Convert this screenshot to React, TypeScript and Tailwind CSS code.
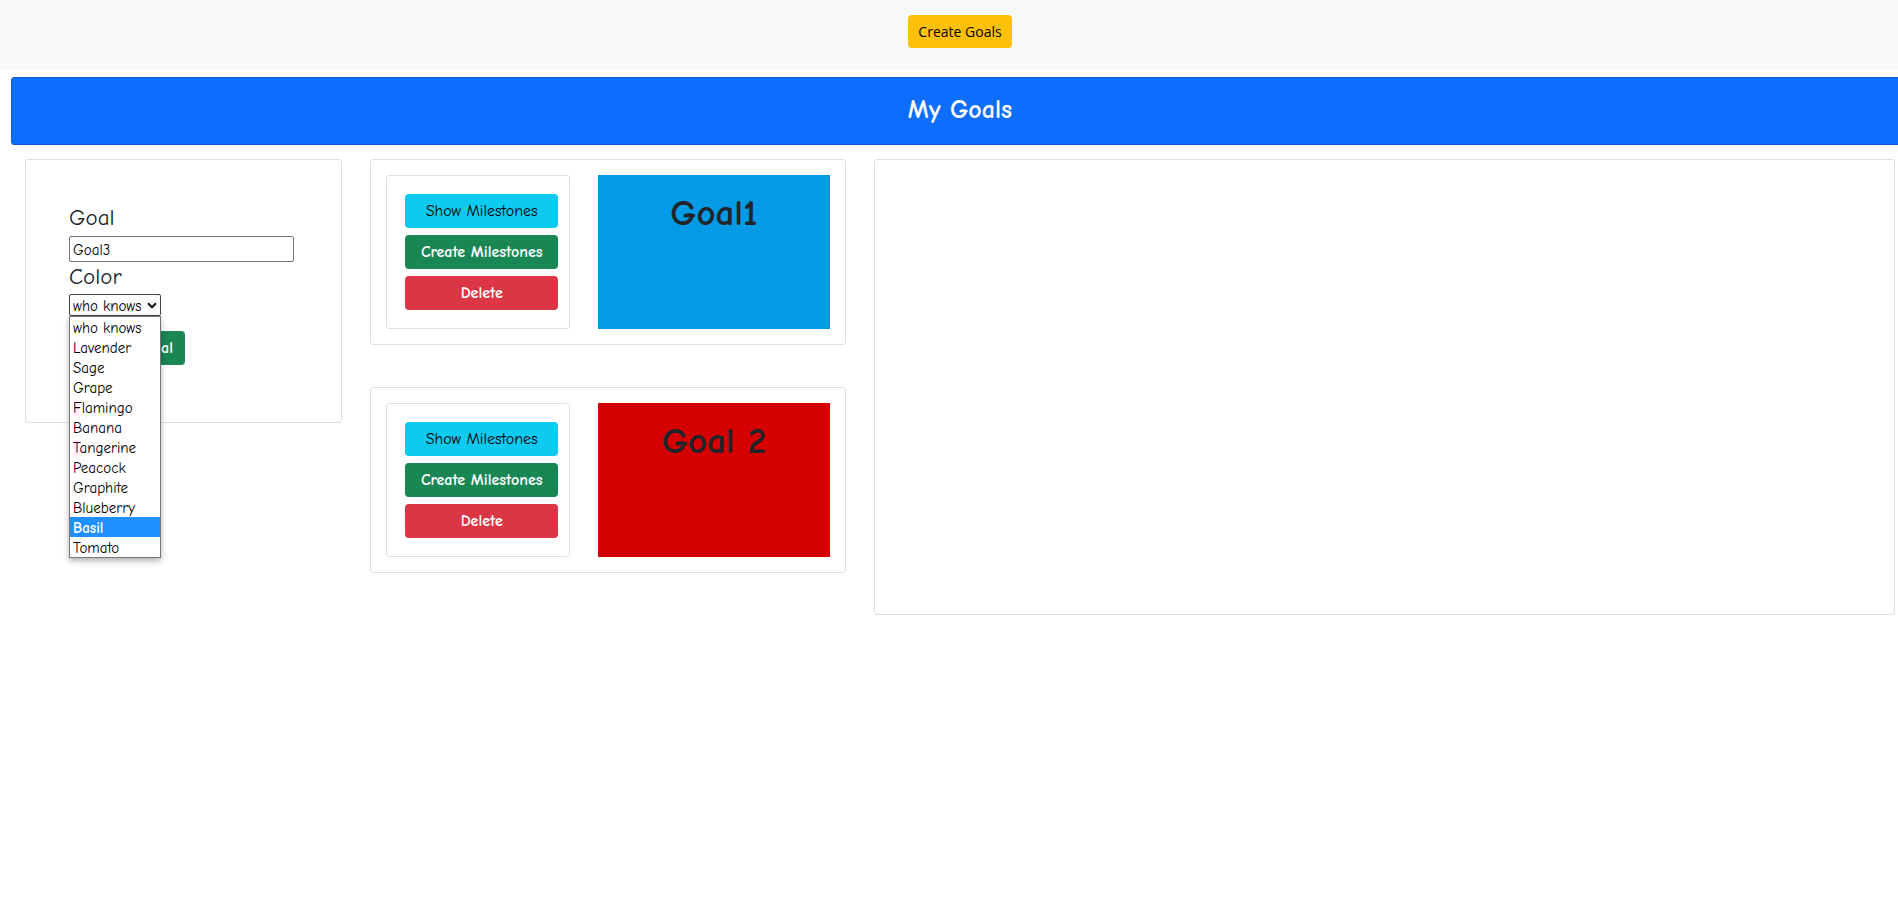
import { useState } from 'react';

const colors = [
  'who knows', 'Lavender', 'Sage', 'Grape', 'Flamingo', 'Banana',
  'Tangerine', 'Peacock', 'Graphite', 'Blueberry', 'Basil', 'Tomato',
];

const goals = [
  { name: 'Goal1', background: 'bg-[#039be5]' },
  { name: 'Goal 2', background: 'bg-[#d50000]' },
];

function GoalForm() {
  const [goal, setGoal] = useState('Goal3');
  const [color, setColor] = useState('who knows');

  return (
    <form
      className="flex flex-col items-start rounded-[3px] border border-[#dfdfdf] px-[43px] pt-[43px] pb-[57px]"
      onSubmit={(e) => e.preventDefault()}
    >
      <label htmlFor="goal" className="h-[33px] text-[23px] leading-[30px]">Goal</label>
      <input
        id="goal"
        value={goal}
        onChange={(e) => setGoal(e.target.value)}
        className="h-[26px] w-[225px] max-w-full rounded-xs border border-[#767676] px-[3px] pt-0.5 text-[15px] text-black outline-none"
      />
      <label htmlFor="color" className="h-8 text-[23px] leading-[30px]">Color</label>
      <div className="relative">
        <select
          id="color"
          value={color}
          onChange={(e) => setColor(e.target.value)}
          className="block h-[22px] w-[92px] appearance-none rounded-xs border border-[#444] bg-[#fcfcfc] pt-px pl-[3px] text-[15px] leading-5 text-black outline-none"
        >
          {colors.map((c) => <option key={c}>{c}</option>)}
        </select>
        <svg viewBox="0 0 10 7" className="pointer-events-none absolute top-2 right-1 h-[7px] w-[10px]" fill="none" stroke="#111" strokeWidth="2.2">
          <path d="M1 1.2 5 5.2 9 1.2" />
        </svg>
        <ul role="listbox" aria-label="Color" className="absolute top-full left-0 z-10 w-full border border-[#767676] bg-white text-[15px] text-black shadow-[0_3px_6px_rgba(0,0,0,0.3)]">
          {colors.map((c) => (
            <li
              key={c}
              role="option"
              aria-selected={c === color}
              onClick={() => setColor(c)}
              className={c === 'Basil' ? 'h-5 bg-[#1e90ff] pl-[3px] leading-[22px] font-bold text-white' : 'h-5 pl-[3px] leading-[22px]'}
            >
              {c}
            </li>
          ))}
        </ul>
      </div>
      <button type="submit" className="mt-[15px] h-[34px] w-[116px] rounded bg-[#198754] pr-3 text-right text-base font-bold whitespace-nowrap text-white">
        Create Goal
      </button>
    </form>
  );
}

function GoalCard({ name, background }: { name: string; background: string }) {
  return (
    <article className="grid grid-cols-[184fr_232fr] gap-7 rounded-[3px] border border-[#dfdfdf] p-[15px]">
      <div className="flex flex-col gap-[7px] rounded-[3px] border border-[#dfdfdf] py-[18px] pr-[11px] pl-[18px] text-base whitespace-nowrap">
        <button className="h-[34px] rounded bg-[#0dcaf0] text-black">Show Milestones</button>
        <button className="h-[34px] rounded bg-[#198754] font-bold text-white">Create Milestones</button>
        <button className="h-[34px] rounded bg-[#dc3545] font-bold text-white">Delete</button>
      </div>
      <div className={`pt-3.5 text-center ${background}`}>
        <h2 className="text-[37px] leading-[48px] font-bold">{name}</h2>
      </div>
    </article>
  );
}

export default function App() {
  return (
    <div className="min-h-screen overflow-x-hidden bg-white font-['Comic_Sans_MS','Comic_Neue',Lato,sans-serif] text-[#212529]">
      <nav className="flex h-[70px] justify-center bg-[#f8f9fa] pt-[15px] pl-[22px]">
        <button className="h-[33px] w-[104px] rounded bg-[#ffc107] font-['Open_Sans',sans-serif] text-[14px] text-black">
          Create Goals
        </button>
      </nav>
      <header className="mt-[7px] -mr-[11px] ml-[11px] h-[68px] rounded-[3px] border border-[#0c5fdb] bg-[#0d6efd] pt-3 text-center text-white">
        <h1 className="text-[26px] leading-10 font-bold">My Goals</h1>
      </header>
      <main className="mt-[14px] mr-[3px] ml-[25px] grid grid-cols-[317fr_475fr_1020fr] items-start gap-7">
        <GoalForm />
        <div className="flex flex-col gap-[42px]">
          {goals.map((g) => <GoalCard key={g.name} name={g.name} background={g.background} />)}
        </div>
        <section aria-label="Milestones" className="h-[456px] rounded-[3px] border border-[#dfdfdf]" />
      </main>
    </div>
  );
}
